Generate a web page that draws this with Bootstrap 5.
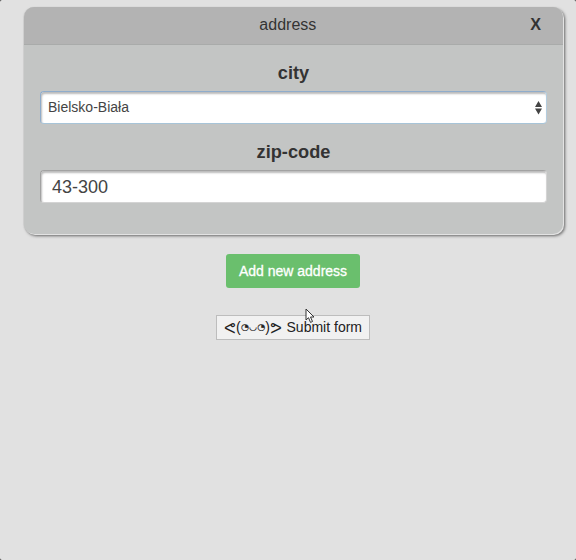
<!DOCTYPE html>
<html lang="en">
<head>
<meta charset="utf-8">
<meta name="viewport" content="width=device-width, initial-scale=1">
<title>Address form</title>
<link href="https://cdn.jsdelivr.net/npm/bootstrap@5.3.0/dist/css/bootstrap.min.css" rel="stylesheet">
<style>
html { background: #333; }
body { background: #e1e1e1; color: #333; font-family: "Liberation Sans", Arial, sans-serif; font-size: 16px; min-height: 560px; border-radius: 2px; padding: 7px 13px 0 24px; overflow: hidden; }
.address-card { --bs-card-border-width: 0; --bs-card-border-radius: 10px; --bs-card-inner-border-radius: 10px; --bs-card-bg: #c3c5c4; width: 539px; height: 227px; box-shadow: 1px 1px 0 #e3e3e3, 2px 2px 3px #666, -1px 0 1px #d3d3d3; color: #333; }
.address-head { --bs-card-cap-bg: #b3b3b3; height: 38px; padding: 0 22px 2px 22px; border-bottom: 1px solid #a9abaa; line-height: 36px; font-size: 16px; }
.remove-btn { color: #333; font-weight: 700; font-size: 17px; line-height: 35px; transform: scaleX(.95); }
.address-fields { padding: 14px 16px 0 16px; }
.field-label { font-size: 18.2px; font-weight: 700; line-height: 28px; margin-bottom: 4px; }
.field-box { height: 33px; border: 1px solid #d4d4d4; border-top-color: #a2a2a2; border-left-color: #a2a2a2; border-radius: 4px; background: #fff; box-shadow: inset 1px 2px 2px #bbb; color: #444; }
.city-box { border-color: #8faccb; border-right-color: #b4cddf; border-bottom-color: #a7c4d8; padding: 0 4px 0 7px; font-size: 14px; margin-bottom: 14px; }
.zip-box { padding: 2px 11px 0; font-size: 18px; }
.add-btn { --bs-btn-bg: #6abf6d; --bs-btn-color: #fff; --bs-btn-border-width: 0; width: 134px; height: 34px; padding: 0; border-radius: 3px; font-size: 14px; -webkit-text-stroke: .3px #fff; margin: 20px 1px 0 0; }
.submit-btn { width: 154px; height: 25px; margin: 27px 1px 0 0; padding: 0 7px; border: 1px solid #bdbdbd; background: #f1f1f1; color: #222; font-size: 14px; line-height: 21px; white-space: nowrap; }
.face { font-family: "DejaVu Sans", sans-serif; width: 58px; line-height: 21px; }
.arm { font-size: 16px; }
.eye { font-size: 9px; -webkit-text-stroke: .2px #222; }
.paren { font-family: "Liberation Sans", sans-serif; font-size: 14px; }
.pointer { position: absolute; left: 305px; top: 308px; }
</style>
</head>
<body>
<main class="d-flex flex-column align-items-center">
  <section class="card address-card">
    <header class="card-header address-head d-flex align-items-center">
      <span class="flex-grow-1 text-center">address</span>
      <button type="button" class="remove-btn btn p-0 border-0">X</button>
    </header>
    <div class="card-body address-fields text-center">
      <label class="field-label d-block" for="city">city</label>
      <div id="city" class="field-box city-box d-flex align-items-center justify-content-between" role="combobox" tabindex="0">
        <span>Bielsko-Biała</span>
        <svg width="7" height="14" viewBox="0 0 7 14" fill="#444"><path d="M3.5 0 7 6H0zM3.5 13.5l-3.5-6h7z"/></svg>
      </div>
      <label class="field-label d-block" for="zip">zip-code</label>
      <input id="zip" class="field-box zip-box d-block w-100" value="43-300">
    </div>
  </section>
  <button type="button" class="btn add-btn">Add new address</button>
  <button type="submit" class="submit-btn d-flex align-items-center justify-content-between"><span class="face d-flex align-items-center justify-content-between"><span class="arm">ᕙ</span><span class="paren">(</span><span class="eye">◔</span><span class="eye">◡</span><span class="eye">◔</span><span class="paren">)</span><span class="arm">ᕗ</span></span><span>Submit form</span></button>
</main>
<svg class="pointer" width="11" height="16" viewBox="0 0 11 16"><path d="M1 1v11l2.5-2.3 2 4.7 2-.9-2-4.5H9z" fill="#fff" stroke="#333" stroke-width="1"/></svg>
<script src="https://cdn.jsdelivr.net/npm/bootstrap@5.3.0/dist/js/bootstrap.bundle.min.js"></script>
</body>
</html>
